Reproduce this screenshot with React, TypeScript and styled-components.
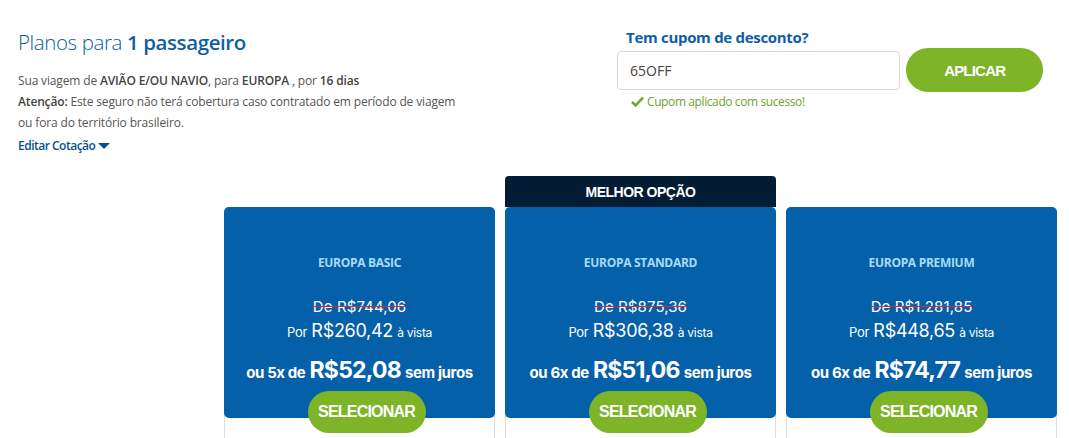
import React from 'react';
import styled, { createGlobalStyle } from 'styled-components';

const GlobalStyle = createGlobalStyle`
  html, body {
    margin: 0;
    padding: 0;
    background: #ffffff;
    overflow: hidden;
  }
  body {
    font-family: 'Open Sans', 'Noto Sans', sans-serif;
  }
`;

const Page = styled.div`
  width: 1069px;
  height: 438px;
  overflow: hidden;
`;

const TopBar = styled.div`
  display: flex;
  justify-content: space-between;
  align-items: flex-start;
`;

const Intro = styled.div`
  padding: 28px 0 0 18px;
`;

const Title = styled.h1`
  margin: 0 0 14px;
  font-size: 20.5px;
  font-weight: 300;
  color: #0d5ea6;
  letter-spacing: -0.4px;

  strong {
    font-weight: 600;
  }
`;

const InfoLine = styled.p`
  margin: 0;
  font-size: 12px;
  line-height: 21px;
  color: #555;
  letter-spacing: -0.15px;

  b {
    font-weight: 600;
    color: #444;
  }
`;

const EditLink = styled.a`
  display: inline-flex;
  align-items: center;
  gap: 3px;
  margin-top: 2px;
  font-size: 12px;
  font-weight: 600;
  color: #0a4f8f;
  letter-spacing: -0.5px;
  text-decoration: none;
  cursor: pointer;
`;

const Caret = styled.span`
  display: inline-block;
  width: 0;
  height: 0;
  border-left: 6px solid transparent;
  border-right: 6px solid transparent;
  border-top: 6px solid #0a4f8f;
`;

const Coupon = styled.div`
  width: 426px;
  margin: 26px 26px 0 0;
`;

const CouponLabel = styled.div`
  margin-left: 9px;
  font-size: 15px;
  font-weight: 700;
  color: #0d5ea6;
  letter-spacing: -0.3px;
  line-height: 22px;
`;

const CouponRow = styled.div`
  display: flex;
  align-items: center;
  gap: 6px;
`;

const CouponInput = styled.input`
  box-sizing: border-box;
  width: 284px;
  height: 39px;
  padding: 0 12px;
  border: 1px solid #d9d9d9;
  border-radius: 4px;
  font-family: inherit;
  font-size: 14px;
  color: #444;
  outline: none;
`;

const PillButton = styled.button<{ $w: number; $h: number; $size: number }>`
  width: ${({ $w }) => $w}px;
  height: ${({ $h }) => $h}px;
  border: none;
  border-radius: ${({ $h }) => $h / 2}px;
  background: #7db428;
  color: #fff;
  font-family: 'Liberation Sans', Arial, sans-serif;
  font-size: ${({ $size }) => $size}px;
  font-weight: 700;
  letter-spacing: -0.8px;
  padding: 0;
  cursor: pointer;
`;

const Success = styled.div`
  display: flex;
  align-items: center;
  gap: 3px;
  margin: 1px 0 0 14px;
  font-size: 12px;
  color: #6ea52b;
  letter-spacing: -0.4px;
`;

const Plans = styled.div`
  display: grid;
  grid-template-columns: repeat(3, 271px);
  column-gap: 10px;
  margin: 21px 0 0 224px;
`;

const PlanColumn = styled.div`
  display: flex;
  flex-direction: column;
`;

const Banner = styled.div<{ $show: boolean }>`
  height: 31px;
  border-radius: 4px 4px 0 0;
  background: ${({ $show }) => ($show ? '#021d33' : 'transparent')};
  color: #fff;
  font-family: 'Liberation Sans', Arial, sans-serif;
  font-size: 14px;
  font-weight: 700;
  letter-spacing: -0.5px;
  display: flex;
  align-items: center;
  justify-content: center;
`;

const Card = styled.div`
  border: 1px solid #dedede;
  border-top: none;
  border-radius: 5px 5px 0 0;
  display: flex;
  flex-direction: column;
  align-items: center;
  min-height: 260px;
`;

const CardBlue = styled.div`
  align-self: stretch;
  margin: 0 -1px;
  height: 211px;
  box-sizing: border-box;
  padding-top: 48px;
  background: #0560aa;
  border-radius: 5px;
  color: #fff;
  text-align: center;
`;

const PlanName = styled.div`
  font-size: 12px;
  font-weight: 700;
  line-height: 16px;
  color: #a8dbf8;
  letter-spacing: -0.3px;
`;

const OldPrice = styled.div`
  margin-top: 26px;
  font-family: 'Inter', sans-serif;
  font-size: 15px;
  line-height: 20px;
  text-decoration: line-through;
  text-decoration-color: #e0262b;
  letter-spacing: 0.1px;
`;

const CashPrice = styled.div`
  margin-top: 2px;
  font-family: 'Inter', sans-serif;
  font-size: 13px;
  line-height: 24px;
  letter-spacing: -0.3px;

  big {
    font-size: 18px;
    margin: 0 1px;
  }
  small {
    font-size: 12px;
  }
`;

const Installment = styled.div`
  margin-top: 10px;
  font-family: 'Inter', sans-serif;
  font-size: 15px;
  font-weight: 700;
  line-height: 30px;
  letter-spacing: -0.4px;

  big {
    font-size: 23px;
    margin: 0 1px;
    letter-spacing: -0.8px;
  }
`;

const SelectWrap = styled.div`
  margin: -27px 0 0 14px;
  position: relative;
  z-index: 1;
`;

const Check = () => (
  <svg width="13" height="11" viewBox="0 0 13 11">
    <path d="M1 5.8 L4.6 9.4 L12 1.6" fill="none" stroke="#6ea52b" strokeWidth="2.6" />
  </svg>
);

const plans = [
  { name: 'EUROPA BASIC', old: 'R$744,06', cash: 'R$260,42', n: 5, parcel: 'R$52,08', best: false },
  { name: 'EUROPA STANDARD', old: 'R$875,36', cash: 'R$306,38', n: 6, parcel: 'R$51,06', best: true },
  { name: 'EUROPA PREMIUM', old: 'R$1.281,85', cash: 'R$448,65', n: 6, parcel: 'R$74,77', best: false },
];

export default function App() {
  return (
    <Page>
      <GlobalStyle />
      <TopBar>
        <Intro>
          <Title>
            Planos para <strong>1 passageiro</strong>
          </Title>
          <InfoLine>
            Sua viagem de <b>AVIÃO E/OU NAVIO</b>, para <b>EUROPA</b> , por <b>16 dias</b>
          </InfoLine>
          <InfoLine>
            <b>Atenção:</b> Este seguro não terá cobertura caso contratado em período de viagem
          </InfoLine>
          <InfoLine>ou fora do território brasileiro.</InfoLine>
          <EditLink>
            Editar Cotação <Caret />
          </EditLink>
        </Intro>
        <Coupon>
          <CouponLabel>Tem cupom de desconto?</CouponLabel>
          <CouponRow>
            <CouponInput defaultValue="65OFF" />
            <PillButton $w={137} $h={44} $size={15}>APLICAR</PillButton>
          </CouponRow>
          <Success>
            <Check /> Cupom aplicado com sucesso!
          </Success>
        </Coupon>
      </TopBar>
      <Plans>
        {plans.map((p) => (
          <PlanColumn key={p.name}>
            <Banner $show={p.best}>{p.best ? 'MELHOR OPÇÃO' : ''}</Banner>
            <Card>
              <CardBlue>
                <PlanName>{p.name}</PlanName>
                <OldPrice>De {p.old}</OldPrice>
                <CashPrice>
                  Por <big>{p.cash}</big> <small>à vista</small>
                </CashPrice>
                <Installment>
                  ou {p.n}x de <big>{p.parcel}</big> sem juros
                </Installment>
              </CardBlue>
              <SelectWrap>
                <PillButton $w={118} $h={42} $size={16}>SELECIONAR</PillButton>
              </SelectWrap>
            </Card>
          </PlanColumn>
        ))}
      </Plans>
    </Page>
  );
}
